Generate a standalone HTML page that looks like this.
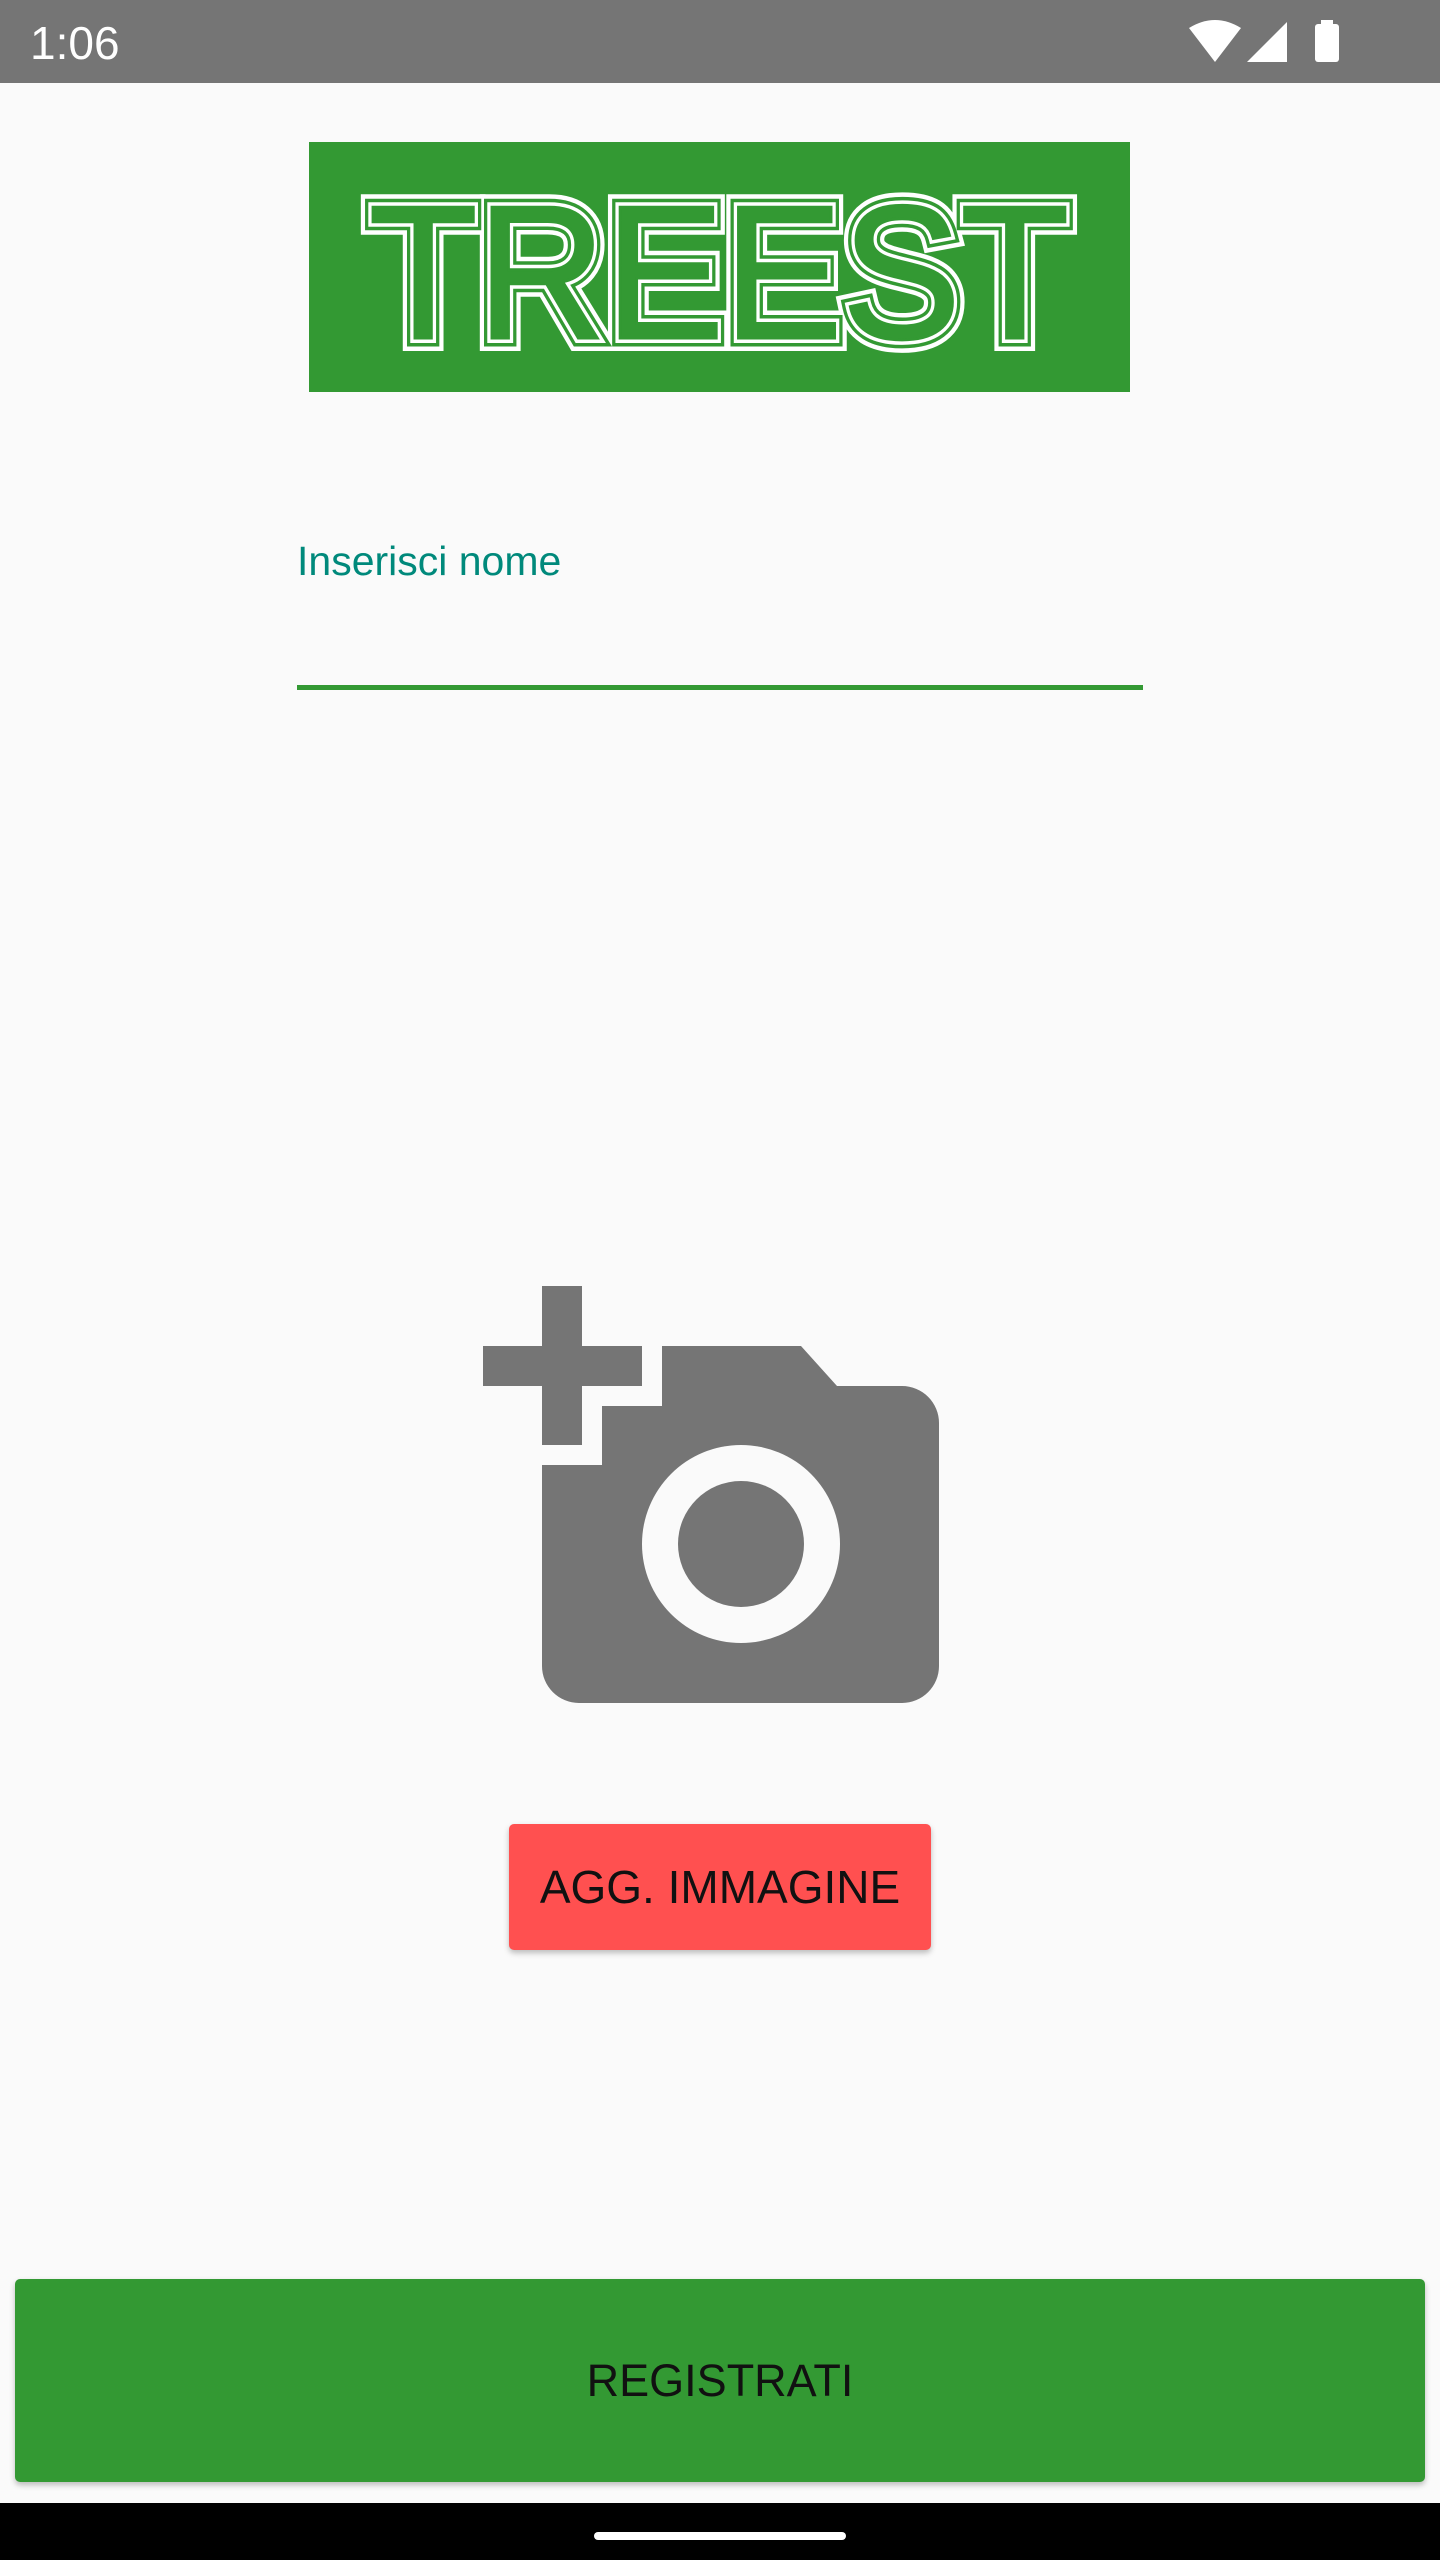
<!DOCTYPE html>
<html><head><meta charset="utf-8"><style>
html,body{margin:0;padding:0;width:1440px;height:2560px;overflow:hidden;}
body{background:#fafafa;font-family:"Liberation Sans",Roboto,sans-serif;}
#wrap{position:relative;width:1440px;height:2560px;overflow:hidden;}
.sb{position:absolute;left:0;top:0;width:1440px;height:83px;background:#757575;}
.time{position:absolute;left:30px;top:16px;color:#fff;font-size:46px;}
.logo{position:absolute;left:309px;top:142px;width:821px;height:250px;background:#339933;overflow:hidden;}
.lbl{position:absolute;left:297px;top:538px;color:#00897b;font-size:41px;}
.line{position:absolute;left:297px;top:685px;width:846px;height:5px;background:#339933;}
.btn1{position:absolute;left:509px;top:1824px;width:422px;height:126px;background:#ff5050;border-radius:5px;box-shadow:0 3px 6px rgba(0,0,0,.25);color:#111;font-size:46px;display:flex;align-items:center;justify-content:center;}
.btn2{position:absolute;left:15px;top:2279px;width:1410px;height:203px;background:#339933;border-radius:5px;box-shadow:0 3px 6px rgba(0,0,0,.25);color:#111;font-size:45px;display:flex;align-items:center;justify-content:center;}
.nav{position:absolute;left:0;top:2503px;width:1440px;height:57px;background:#000;}
.handle{position:absolute;left:594px;top:2532px;width:252px;height:8px;border-radius:4px;background:#fff;}
</style></head><body><div id="wrap">
<div class="sb"><div class="time">1:06</div>
<svg style="position:absolute;left:1185px;top:18px" width="170" height="48" viewBox="0 0 170 48">
<path d="M4 10 Q30 -6 56 10 L30 44 Z" fill="#fff"/>
<path d="M62 44 L102 4 L102 44 Z" fill="#fff"/>
<rect x="130" y="6" width="24" height="38" rx="3" fill="#fff"/><rect x="136" y="2" width="12" height="6" fill="#fff"/>
</svg></div>
<div class="logo">
<svg width="821" height="250" viewBox="0 0 821 250">
<g font-family="Liberation Sans, sans-serif" font-size="190" stroke-linejoin="miter">
<text x="60" y="196" textLength="700" lengthAdjust="spacingAndGlyphs" fill="#339933" stroke="#fff" stroke-width="26">TREEST</text>
<text x="60" y="196" textLength="700" lengthAdjust="spacingAndGlyphs" fill="#339933" stroke="#339933" stroke-width="17">TREEST</text>
<text x="60" y="196" textLength="700" lengthAdjust="spacingAndGlyphs" fill="#339933" stroke="#fff" stroke-width="10">TREEST</text>
<text x="60" y="196" textLength="700" lengthAdjust="spacingAndGlyphs" fill="#339933" stroke="#339933" stroke-width="3">TREEST</text>
</g></svg></div>
<div class="lbl">Inserisci nome</div>
<div class="line"></div>
<svg style="position:absolute;left:470px;top:1270px" width="490" height="450" viewBox="470 1270 490 450">
<g fill="#757575">
<rect x="542" y="1286" width="40" height="159"/>
<rect x="483" y="1346" width="159" height="40"/>
<path d="M542 1465 L602 1465 L602 1406 L662 1406 L662 1346 L801 1346 L837 1386 L902 1386 A37 37 0 0 1 939 1423 L939 1666 A37 37 0 0 1 902 1703 L579 1703 A37 37 0 0 1 542 1666 Z"/>
</g>
<circle cx="741" cy="1544" r="99" fill="#fafafa"/>
<circle cx="741" cy="1544" r="63" fill="#757575"/>
</svg>
<div class="btn1">AGG. IMMAGINE</div>
<div class="btn2">REGISTRATI</div>
<div class="nav"></div><div class="handle"></div>
</div></body></html>
